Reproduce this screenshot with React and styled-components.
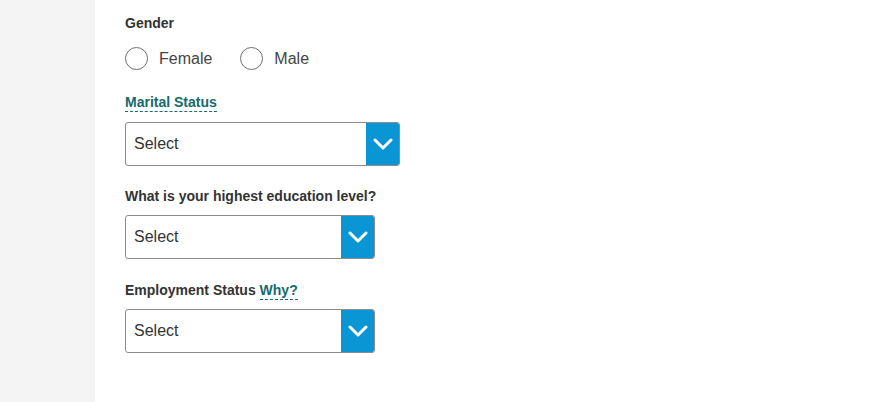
import styled, { createGlobalStyle } from "styled-components";

const GlobalStyle = createGlobalStyle`
  html, body {
    margin: 0;
    padding: 0;
    background: #ffffff;
    font-family: "Liberation Sans", Arial, sans-serif;
  }
`;

const Page = styled.div`
  display: flex;
  min-height: 402px;
`;

const Sidebar = styled.aside`
  width: 95px;
  flex-shrink: 0;
  background: #f4f4f4;
`;

const Main = styled.main`
  flex: 1;
  padding: 15px 0 0 30px;
  display: flex;
  flex-direction: column;
`;

const Field = styled.div`
  display: flex;
  flex-direction: column;
  margin-bottom: ${({ $gap }) => $gap || 0}px;
`;

const Label = styled.div`
  font-size: 14px;
  font-weight: bold;
  color: #333333;
  line-height: 16px;
  margin-bottom: ${({ $gap }) => $gap || 6}px;
`;

const HelpLink = styled.span`
  color: #166b6b;
  border-bottom: 1px dashed #166b6b;
  padding-bottom: 1px;
  cursor: help;
`;

const RadioRow = styled.div`
  display: flex;
  align-items: center;
  gap: 28px;
`;

const RadioOption = styled.label`
  display: flex;
  align-items: center;
  gap: 11px;
  font-size: 16px;
  color: #444444;
  cursor: pointer;
`;

const RadioCircle = styled.span`
  width: 21px;
  height: 21px;
  border: 1px solid #6f6f6f;
  border-radius: 50%;
  background: #fff;
  display: inline-block;
`;

const SelectBox = styled.div`
  display: flex;
  width: ${({ $width }) => $width}px;
  height: 44px;
  box-sizing: border-box;
  border: 1px solid #8c8c8c;
  border-radius: 3px;
  overflow: hidden;
  background: #fff;
`;

const SelectText = styled.div`
  flex: 1;
  display: flex;
  align-items: center;
  padding-left: 8px;
  font-size: 16px;
  color: #333333;
`;

const SelectButton = styled.div`
  width: 33px;
  background: #0a95d5;
  display: flex;
  align-items: center;
  justify-content: center;
`;

const Chevron = () => (
  <svg width="20" height="12" viewBox="0 0 20 12">
    <path d="M2 2 L10 10 L18 2" fill="none" stroke="#fff" strokeWidth="3" strokeLinecap="round" strokeLinejoin="round" />
  </svg>
);

const Select = ({ width }) => (
  <SelectBox $width={width}>
    <SelectText>Select</SelectText>
    <SelectButton>
      <Chevron />
    </SelectButton>
  </SelectBox>
);

export default function App() {
  return (
    <>
      <GlobalStyle />
      <Page>
        <Sidebar />
        <Main>
          <Field $gap={24}>
            <Label $gap={16}>Gender</Label>
            <RadioRow>
              <RadioOption>
                <RadioCircle />
                Female
              </RadioOption>
              <RadioOption>
                <RadioCircle />
                Male
              </RadioOption>
            </RadioRow>
          </Field>
          <Field $gap={22}>
            <Label $gap={12}>
              <HelpLink>Marital Status</HelpLink>
            </Label>
            <Select width={275} />
          </Field>
          <Field $gap={23}>
            <Label $gap={11}>What is your highest education level?</Label>
            <Select width={250} />
          </Field>
          <Field>
            <Label $gap={11}>
              Employment Status <HelpLink>Why?</HelpLink>
            </Label>
            <Select width={250} />
          </Field>
        </Main>
      </Page>
    </>
  );
}
